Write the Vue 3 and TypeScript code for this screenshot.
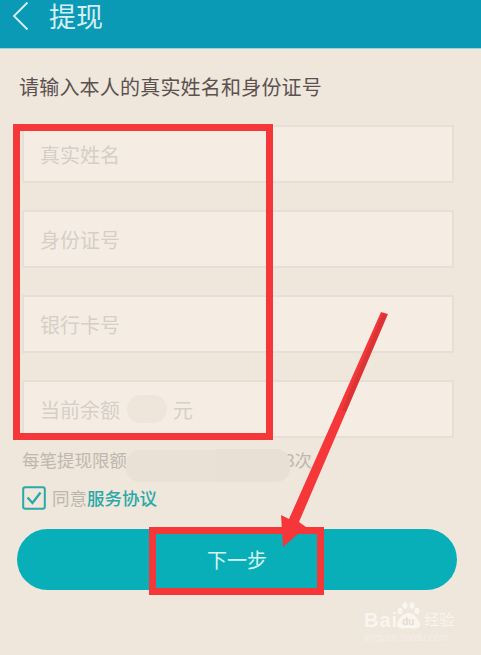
<script setup lang="ts">
const fields: { label: string; balance?: boolean }[] = [
  { label: '真实姓名' },
  { label: '身份证号' },
  { label: '银行卡号' },
  { label: '当前余额', balance: true },
]
</script>

<template>
  <div class="page">
    <header class="bar">
      <svg class="back" width="18" height="30" viewBox="0 0 18 30" fill="none">
        <path d="M16.5 1.5 L3 15 L16.5 28.5" stroke="#d5eef2" stroke-width="1.9" />
      </svg>
      <span class="title">提现</span>
    </header>

    <main class="content">
      <p class="lead">请输入本人的真实姓名和身份证号</p>

      <div class="fields">
        <div v-for="f in fields" :key="f.label" class="field">
          <span>{{ f.label }}</span>
          <template v-if="f.balance">
            <i class="blot-small"></i>
            <span>元</span>
          </template>
        </div>
      </div>

      <p class="hint">
        <span>每笔提现限额</span>
        <span class="hint-end">3次</span>
        <i class="blot-wide"></i>
        <i class="blot-wide-right"></i>
      </p>

      <label class="agree">
        <svg width="24" height="24" viewBox="0 0 24 24" fill="none">
          <rect x="1.2" y="1.2" width="21.6" height="21.6" rx="2" stroke="#2aa9a8" stroke-width="2" />
          <path d="M5.5 11.5 L10.5 17 L18.5 6.5" stroke="#2aa9a8" stroke-width="2.4" />
        </svg>
        <span class="agree-text">同意<b>服务协议</b></span>
      </label>

      <button class="next" type="button">下一步</button>
    </main>

    <div class="mark mark-fields"></div>
    <div class="mark mark-button"></div>
    <svg class="arrow" width="481" height="655" viewBox="0 0 481 655">
      <path d="M381 312 L388 314 L299 522 L306 527 L283 547 L281 515 L289 519 Z" fill="#f5373a" />
      <path d="M383 313 L387 315 L346 412 L342 410 Z" fill="#c93235" opacity="0.6" />
    </svg>

    <div class="watermark">
      <div class="wm-main">
        <span class="wm-bai">Bai</span>
        <span class="wm-paw">
          <svg width="27" height="27" viewBox="0 0 27 27" fill="#fbf8f3">
            <ellipse cx="5" cy="9" rx="2.6" ry="3.2" />
            <ellipse cx="10" cy="3.6" rx="2.6" ry="3.4" />
            <ellipse cx="17" cy="3.6" rx="2.6" ry="3.4" />
            <ellipse cx="22" cy="9" rx="2.6" ry="3.2" />
            <path d="M13.5 11 C8 11 2 18 2 23 C2 27 8 27 13.5 26 C19 27 25 27 25 23 C25 18 19 11 13.5 11 Z" />
          </svg>
          <span class="wm-du">du</span>
        </span>
        <span class="wm-cn">经验</span>
      </div>
      <div class="wm-url">jingyan.baidu.com</div>
    </div>
  </div>
</template>

<style scoped>
.page {
  position: relative;
  width: 481px;
  height: 655px;
  overflow: hidden;
  background: #efe6dc;
  font-family: "Liberation Sans", "Noto Sans CJK SC", sans-serif;
}
.bar {
  display: flex;
  align-items: center;
  gap: 20px;
  height: 49px;
  padding-left: 11px;
  box-sizing: border-box;
  background: #0a9ab6;
  border-bottom: 1px solid #9dd3d8;
}
.back {
  margin-top: -16px;
}
.title {
  margin-top: -13px;
  color: #d5eef2;
  font-size: 27px;
  line-height: 34px;
}
.content {
  display: flex;
  flex-direction: column;
  padding: 0 24px 0 17px;
}
.lead {
  margin: 26px 0 0 2px;
  color: #5b5250;
  font-size: 20px;
  letter-spacing: 0.2px;
  line-height: 26px;
}
.fields {
  display: flex;
  flex-direction: column;
  gap: 27px;
  margin: 24px 3px 0 5px;
}
.field {
  display: flex;
  align-items: center;
  height: 58px;
  box-sizing: border-box;
  padding-left: 16px;
  background: #f5ede4;
  border: 2px solid #e7dfd5;
  color: #d6cfc7;
  font-size: 20px;
}
.blot-small {
  width: 40px;
  height: 28px;
  margin: 0 6px 0 7px;
  border-radius: 14px;
  background: #eee5db;
}
.hint {
  position: relative;
  display: flex;
  justify-content: space-between;
  width: 290px;
  margin: 11px 0 0 5px;
  color: #c0b8af;
  font-size: 17.5px;
  line-height: 24px;
}
.blot-wide {
  position: absolute;
  left: 104px;
  top: 1px;
  width: 90px;
  height: 32px;
  border-radius: 14px 0 0 14px;
  background: #e9e1d6;
}
.blot-wide-right {
  position: absolute;
  left: 194px;
  top: 0;
  width: 74px;
  height: 33px;
  border-radius: 0 14px 14px 0;
  background: #e8dfd5;
}
.agree {
  display: flex;
  align-items: center;
  gap: 6px;
  margin: 12px 0 0 5px;
}
.agree-text {
  color: #bdb6ad;
  font-size: 17.5px;
}
.agree-text b {
  color: #2aa9a8;
  font-weight: 500;
}
.next {
  height: 61px;
  margin-top: 19px;
  padding: 0;
  border: 0;
  border-radius: 31px;
  background: #08afb8;
  color: #d9f5f3;
  font-family: inherit;
  font-size: 20px;
}
.mark {
  position: absolute;
  box-sizing: border-box;
  border: 7px solid #f5373a;
}
.mark-fields {
  left: 13px;
  top: 124px;
  width: 260px;
  height: 316px;
}
.mark-button {
  left: 149px;
  top: 527px;
  width: 175px;
  height: 68px;
}
.arrow {
  position: absolute;
  left: 0;
  top: 0;
  pointer-events: none;
}
.watermark {
  position: absolute;
  left: 364px;
  top: 602px;
  width: 92px;
  color: #fbf8f3;
  opacity: 0.85;
}
.wm-main {
  display: flex;
  align-items: flex-end;
  height: 27px;
}
.wm-bai {
  font-size: 20px;
  font-weight: 700;
  line-height: 18px;
  letter-spacing: 1px;
}
.wm-paw {
  position: relative;
  display: block;
  width: 27px;
  height: 27px;
  margin-left: -3px;
}
.wm-paw svg {
  display: block;
}
.wm-du {
  position: absolute;
  left: 7px;
  top: 14px;
  color: #e3d9cd;
  font-size: 10px;
  font-weight: 700;
  line-height: 11px;
}
.wm-cn {
  margin-left: 2px;
  font-size: 15px;
  line-height: 18px;
}
.wm-url {
  margin-top: 3px;
  color: #f6f1ea;
  font-size: 10.5px;
  line-height: 10px;
  white-space: nowrap;
}
</style>
